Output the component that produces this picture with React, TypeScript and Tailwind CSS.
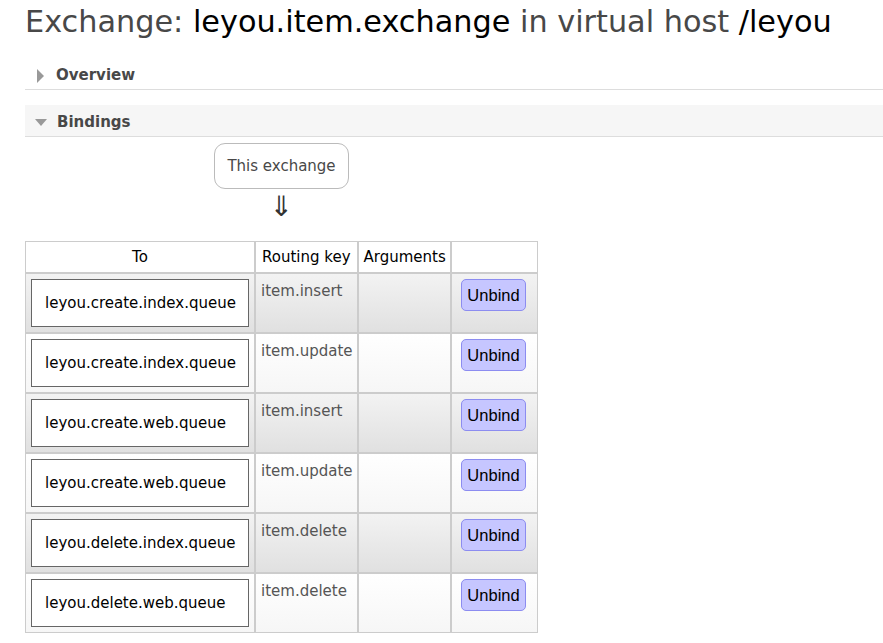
import React from "react";

const rows = [
  { q: "leyou.create.index.queue", k: "item.insert" },
  { q: "leyou.create.index.queue", k: "item.update" },
  { q: "leyou.create.web.queue", k: "item.insert" },
  { q: "leyou.create.web.queue", k: "item.update" },
  { q: "leyou.delete.index.queue", k: "item.delete" },
  { q: "leyou.delete.web.queue", k: "item.delete" },
];

export default function App() {
  return (
    <div
      className="w-[883px] h-[643px] overflow-hidden bg-white"
      style={{ fontFamily: '"DejaVu Sans", Verdana, sans-serif' }}
    >
      <h1 className="ml-[25px] pt-[4px] text-[30.3px] leading-[36px] text-[#484848] whitespace-nowrap">
        Exchange: <span className="text-black">leyou.item.exchange</span> in virtual host{" "}
        <span className="text-black">/leyou</span>
      </h1>

      <div className="ml-[25px] mt-[22px] h-[28px] flex items-center border-b border-[#dddddd]">
        <div className="ml-[12px] w-0 h-0 border-y-[7px] border-y-transparent border-l-[7px] border-l-[#999999]" />
        <span className="ml-[12px] text-[15px] font-bold text-[#484848]">Overview</span>
      </div>

      <div className="ml-[25px] mt-[15px] h-[32px] flex items-center bg-[#f6f6f6] border-b border-[#dddddd]">
        <div className="ml-[10px] mt-[4px] w-0 h-0 border-x-[6px] border-x-transparent border-t-[7px] border-t-[#999999]" />
        <span className="ml-[10px] mt-[3px] text-[15px] font-bold text-[#484848]">Bindings</span>
      </div>

      <div className="ml-[214px] mt-[6px] w-[135px] h-[46px] flex items-center justify-center rounded-[11px] border border-[#bbbbbb] text-[15px] text-[#484848]">
        This exchange
      </div>
      <div className="ml-[214px] w-[135px] mt-[2px] h-[32px] flex justify-center text-[28px] leading-[32px] text-[#333333]">
        ⇓
      </div>

      <table className="ml-[25px] mt-[18px] border-separate border-spacing-0 text-[15px]">
        <thead>
          <tr className="h-[32px]">
            <th className="w-[230px] border border-[#cccccc] font-normal text-center text-black p-0">To</th>
            <th className="w-[102px] border border-[#cccccc] font-normal text-left text-black pl-[6px] pr-[4px] py-0 whitespace-nowrap">Routing key</th>
            <th className="w-[93px] border border-[#cccccc] font-normal text-left text-black pl-[5px] pr-[3px] py-0">Arguments</th>
            <th className="w-[87px] border border-[#cccccc] p-0"></th>
          </tr>
        </thead>
        <tbody>
          {rows.map((r, i) => {
            const bg =
              i % 2 === 0
                ? "bg-gradient-to-b from-[#f3f3f3] to-[#e0e0e0]"
                : "bg-gradient-to-b from-[#ffffff] to-[#f6f6f6]";
            return (
              <tr key={i} className={`h-[60px] ${bg}`}>
                <td className="border border-[#cccccc] align-top px-[5px] pt-[5px] pb-0">
                  <div className="h-[48px] border border-[#666666] bg-white flex items-center pl-[13px] text-black whitespace-nowrap">
                    {r.q}
                  </div>
                </td>
                <td className="border border-[#cccccc] align-top pl-[5px] pr-[4px] pt-[8px] text-[#555555] leading-[18px]">
                  {r.k}
                </td>
                <td className="border border-[#cccccc] align-top"></td>
                <td className="border border-[#cccccc] align-top pt-[5px]">
                  <div className="flex justify-center pr-[1px]">
                    <button
                      className="w-[65px] h-[32px] rounded-[5px] border border-[#8c8cf0] bg-[#c6c6ff] text-[16.5px] text-black"
                      style={{ fontFamily: '"Liberation Sans", Arial, sans-serif' }}
                    >
                      Unbind
                    </button>
                  </div>
                </td>
              </tr>
            );
          })}
        </tbody>
      </table>
    </div>
  );
}
